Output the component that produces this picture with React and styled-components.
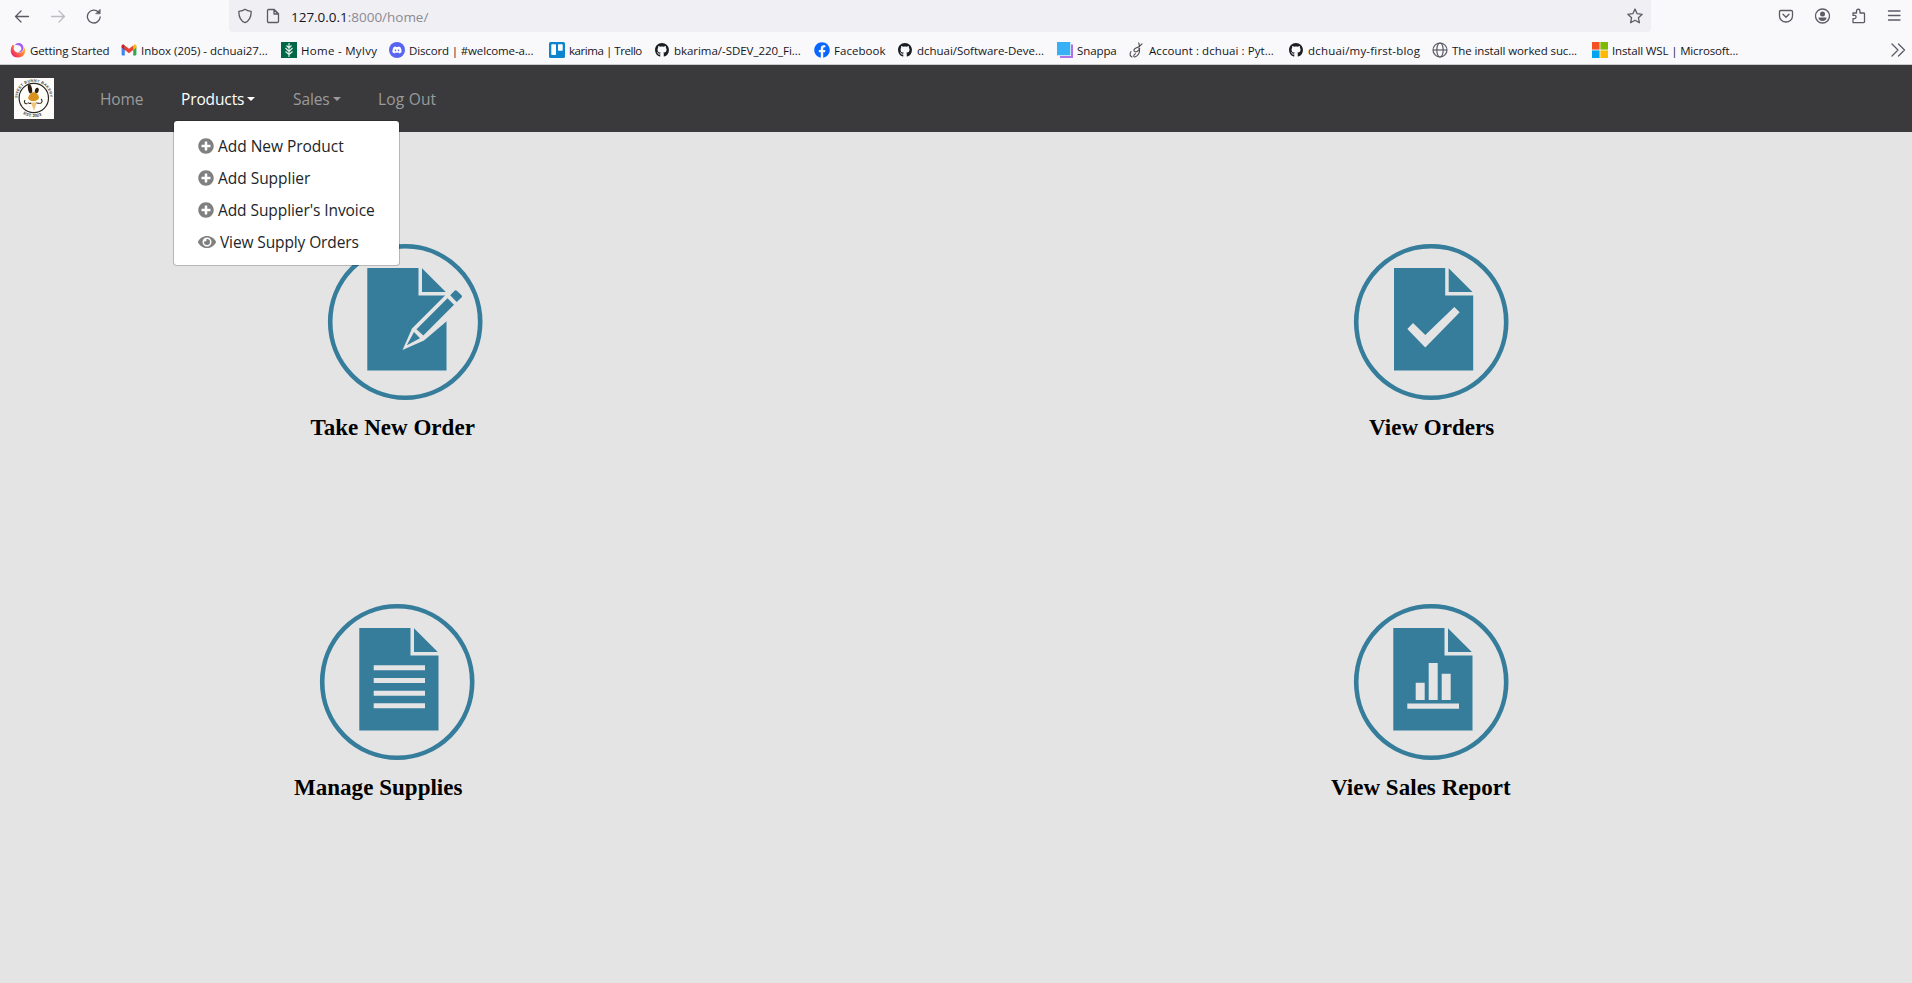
import React from "react";
import styled, { createGlobalStyle } from "styled-components";
import { FaGithub, FaFacebook, FaDiscord, FaPlusCircle, FaEye } from "react-icons/fa";

const GlobalStyle = createGlobalStyle`
  * { box-sizing: border-box; }
  html, body, #root { height: 100%; }
  body { margin: 0; background: #e4e4e4; overflow: hidden; font-family: "Open Sans", "Noto Sans", sans-serif; }
`;

const Page = styled.div`
  display: flex;
  flex-direction: column;
  height: 983px;
  width: 1912px;
  overflow: hidden;
`;

const Chrome = styled.header`
  background: #f9f9fb;
  height: 65px;
  border-bottom: 1px solid #cbcbce;
  flex: none;
`;

const Toolbar = styled.div`
  display: flex;
  height: 32px;
  align-items: center;
  color: #5b5b66;
  svg { display: block; flex: none; }
`;

const ToolGroup = styled.div`
  display: flex;
  align-items: center;
  gap: 20px;
  width: ${(p) => p.$width}px;
  padding-left: ${(p) => p.$pad}px;
`;

const AddressBar = styled.div`
  display: flex;
  align-items: center;
  width: 1422px;
  height: 32px;
  padding: 0 8px;
  background: #f0eff4;
  border-radius: 0 0 4px 4px;
`;

const SiteIcons = styled.div`
  display: flex;
  gap: 12px;
`;

const Url = styled.div`
  flex: 1;
  margin-left: 10px;
  padding-top: 1px;
  font-size: 13.5px;
  line-height: 18px;
  letter-spacing: -0.02px;
  color: #8b8b92;
  b { font-weight: 400; color: #15141a; }
`;

const Bookmarks = styled.div`
  display: flex;
  align-items: center;
  height: 32px;
  padding: 4px 0 0 10px;
`;

const Bookmark = styled.div`
  display: flex;
  align-items: center;
  gap: 4px;
  width: ${(p) => p.$width}px;
  height: 28px;
  flex: none;
  color: #15141a;
  font-size: 11.5px;
  line-height: 16px;
  letter-spacing: ${(p) => p.$spacing}px;
  white-space: nowrap;
  svg { display: block; flex: none; }
`;

const BookmarkLabel = styled.span`
  padding-top: 1px;
`;

const More = styled.div`
  color: #5b5b66;
  svg { display: block; }
`;

const Navbar = styled.nav`
  display: flex;
  align-items: center;
  height: 67px;
  padding-left: 14px;
  background: #3a3a3c;
  flex: none;
`;

const Brand = styled.div`
  width: 86px;
  height: 41px;
  svg { display: block; }
`;

const NavItem = styled.div`
  position: relative;
  display: flex;
  align-items: center;
  width: ${(p) => p.$width}px;
  height: 25px;
  color: ${(p) => (p.$active ? "#ffffff" : "#9a9a9b")};
  font-size: 15.5px;
  line-height: 24px;
  letter-spacing: ${(p) => p.$spacing || 0}px;
  white-space: nowrap;
`;

const Caret = styled.i`
  margin: 0 0 0 3px;
  border: 4.8px solid transparent;
  border-top-color: currentColor;
  border-bottom: 0;
`;

const Menu = styled.div`
  position: absolute;
  z-index: 2;
  top: 34px;
  left: -8px;
  width: 227px;
  height: 146px;
  padding: 9px 0 7px;
  background: #fff;
  background-clip: padding-box;
  border: 1px solid rgba(0, 0, 0, 0.2);
  border-radius: 4px;
`;

const MenuItem = styled.div`
  display: flex;
  align-items: center;
  gap: 4px;
  height: 32px;
  padding-left: 24px;
  color: #212529;
  letter-spacing: ${(p) => p.$spacing}px;
  svg { color: #808080; flex: none; }
`;

const Board = styled.main`
  display: grid;
  grid-template-columns: 1026px 1fr;
  grid-template-rows: 360px 360px;
  padding-top: 112px;
`;

const Tile = styled.section`
  svg { display: block; margin-left: ${(p) => p.$icon}px; }
`;

const TileLabel = styled.h2`
  margin: 14px 0 0 ${(p) => p.$left}px;
  color: #000;
  font: bold 23px/28px "Liberation Serif", serif;
  letter-spacing: 0.03px;
  white-space: nowrap;
`;

const Line = ({ children }) => (
  <svg width="16" height="16" viewBox="0 0 16 16" fill="none" stroke="currentColor" strokeWidth="1.3" strokeLinecap="round" strokeLinejoin="round">
    {children}
  </svg>
);

const FirefoxIcon = () => (
  <svg width="16" height="16" viewBox="0 0 16 16">
    <defs>
      <linearGradient id="flame" x1="0.9" y1="0.2" x2="0.1" y2="0.8">
        <stop offset="0" stopColor="#ffb52e" />
        <stop offset="0.5" stopColor="#ff7139" />
        <stop offset="1" stopColor="#e8246d" />
      </linearGradient>
    </defs>
    <path d="M2.500 3C-.5 7-.2 15.500 8 15.500c7 0 8-6 6.500-10.500C14 10 10 11.500 7 10.500 3.500 9.500 3 6 4.500 3.500z" fill="url(#flame)" />
    <path d="M4.500 3.500C7-.5 13 .5 13.500 5.500c.3 3-2.500 5.500-6 5C11 9.500 12 7.500 11 5.300 10 3 7 2.500 4.500 3.500z" fill="#a45df0" />
  </svg>
);

const GmailIcon = () => (
  <svg width="16" height="16" viewBox="0 0 16 16">
    <path d="M0.600 4v8.600a1 1 0 0 0 1 1h2.200V6.500z" fill="#4285f4" />
    <path d="M15.400 4v8.600a1 1 0 0 1-1 1h-2.200V6.500z" fill="#34a853" />
    <path d="M12.200 3.800v4.200l3.200-2.400V4c0-1.600-1.500-2-2.400-1.200z" fill="#fbbc04" />
    <path d="M3.800 8V3.600L8 6.800l4.200-3.200V8L8 11.200z" fill="#ea4335" />
    <path d="M0.600 4v1.600L3.800 8V3.600L3 2.800C2.100 2 .6 2.500.6 4z" fill="#c5221f" />
  </svg>
);

const IvyIcon = () => (
  <svg width="16" height="16" viewBox="0 0 16 16">
    <rect width="16" height="16" fill="#006747" />
    <path d="M8 1v14M8 6 5.500 3.500M8 6l2.500-2.500M8 9.500 4.500 6M8 9.500 11.500 6M8 12.500 4.500 9.500M8 12.500l3.500-3" stroke="#e4efe9" strokeWidth="1.100" fill="none" />
  </svg>
);

const DiscordIcon = () => (
  <svg width="16" height="16" viewBox="0 0 16 16">
    <circle cx="8" cy="8" r="8" fill="#5865f2" />
    <FaDiscord x="3" y="3" size="10" color="#fff" />
  </svg>
);

const TrelloIcon = () => (
  <svg width="16" height="16" viewBox="0 0 16 16">
    <rect width="16" height="16" rx="1.500" fill="#0d84ce" />
    <rect x="2.300" y="2.300" width="4.700" height="10.700" rx="0.700" fill="#fff" />
    <rect x="9" y="2.300" width="4.700" height="6.500" rx="0.700" fill="#fff" />
  </svg>
);

const GithubIcon = () => (
  <svg width="16" height="16" viewBox="0 0 16 16">
    <FaGithub x="0.800" y="0.800" size="14.400" color="#1b1f23" />
  </svg>
);

const FacebookIcon = () => <FaFacebook size={16} color="#0866ff" />;

const SnappaIcon = () => (
  <svg width="16" height="16" viewBox="0 0 16 16">
    <path d="M3 14h11V2.500h2V16H3z" fill="#b072e6" />
    <rect width="13.300" height="13.300" fill="#38b0f5" />
  </svg>
);

const SnakeIcon = () => (
  <svg width="16" height="16" viewBox="0 0 16 16" fill="none" stroke="#4c4c50" strokeWidth="1.100" strokeLinecap="round">
    <path d="M9.800.800 10.500 4.500M13 1.800 10.200 4.500 6.500 6.200C3.500 7.500 5.500 11 8 9.500s3.500-4 1.800-3.200M2 9.500c-2 2.500-.5 5 1 5.500M10.500 7.500c.5 3-1.500 6.500-4.500 7.500-2 .3-1.500-2.500.5-3.200" />
  </svg>
);

const GlobeIcon = () => (
  <svg width="16" height="16" viewBox="0 0 16 16" fill="none" stroke="#5b5b66" strokeWidth="1.200">
    <circle cx="8" cy="8" r="7" />
    <ellipse cx="8" cy="8" rx="3.200" ry="7" />
    <path d="M1 8h14" />
  </svg>
);

const MicrosoftIcon = () => (
  <svg width="16" height="16" viewBox="0 0 16 16">
    <rect width="7.600" height="7.600" fill="#f25022" />
    <rect x="8.400" width="7.600" height="7.600" fill="#7fba00" />
    <rect y="8.400" width="7.600" height="7.600" fill="#00a4ef" />
    <rect x="8.400" y="8.400" width="7.600" height="7.600" fill="#ffb900" />
  </svg>
);

const BakeryLogo = () => (
  <svg width="40" height="41" viewBox="0 0 40 41">
    <defs>
      <path id="arcTop" d="M3.500 20A16.300 16.300 0 0 1 36.100 20" />
      <path id="arcBottom" d="M0.700 20A19.100 19.100 0 0 0 38.900 20" />
    </defs>
    <rect width="40" height="41" fill="#fdfcf9" />
    <circle cx="19.800" cy="20" r="14.700" fill="#fffefb" stroke="#2b2723" strokeWidth="1.200" />
    <ellipse cx="16" cy="11" rx="2" ry="4.500" transform="rotate(-12 16 11)" fill="#2c1c10" />
    <ellipse cx="22.800" cy="12.500" rx="1.900" ry="2.800" transform="rotate(20 22.800 12.500)" fill="#2c1c10" />
    <path d="M14 20c1-3 3-5.500 5.500-6 3 .5 5.500 3 5.500 6-1.500 4-9 4.500-11 0z" fill="#d8921d" />
    <path d="M16.800 24.500h6L20 33z" fill="#f0c37c" />
    <path d="M11 22c-1.500 2 0 4.500 2.500 3.500M14 24.500c1 1.200 2.200 1.300 3 .3M27 21c2 1.500 1 4.500-1.500 4.500M22.500 24.500c.8 1 2 1 2.800.3" fill="none" stroke="#342719" strokeWidth="1.100" />
    <text fontFamily="Liberation Sans, sans-serif" fontSize="3.800" fontWeight="bold" fill="#4b4640"><textPath href="#arcTop" textLength="50">SWEET BUNNY BAKERY</textPath></text>
    <text fontFamily="Liberation Sans, sans-serif" fontSize="4.200" fontWeight="bold" fill="#3b3630"><textPath href="#arcBottom" startOffset="31%">EST. 2023</textPath></text>
  </svg>
);

const ICON_BLUE = "#357d9b";
const PAPER = "#e4e4e4";

const TileIcon = ({ shift = 0, children }) => (
  <svg width="156" height="156" viewBox="0 0 156 156">
    <ellipse cx="78.200" cy="78" rx="75" ry="75.700" fill="none" stroke={ICON_BLUE} strokeWidth="4.600" />
    <path d={`M${40.3 + shift} 24H${91.5 + shift}V51.500H${119.5 + shift}V126.500H${40.3 + shift}zM${95 + shift} 24.300V48H${118.8 + shift}z`} fill={ICON_BLUE} />
    {children}
  </svg>
);

const PencilArt = () => (
  <>
    <path d="M75.500 106 85 84.500 120.500 49 137 62.500 97 96.500z" fill={PAPER} />
    <path d="M89.500 85.300 120.500 54.300 127 60.700 96.300 91.600zM79.800 101.300 87 88 93 94.300z" fill={ICON_BLUE} />
    <path d="M123.200 51.200 127.600 46.800Q128.700 45.700 129.800 46.800L134.500 51.200Q135.600 52.300 134.500 53.400L129.700 58z" fill={ICON_BLUE} />
  </>
);
const CheckArt = () => <path d="M54.300 85 60 79 72.300 91 101.300 63 106.700 68.300 72.300 103.500z" fill={PAPER} />;
const LinesArt = () => <path d="M54.700 61.300h51.300v5H54.700zM54.700 74h51.300v5H54.700zM54.700 86.700h51.300v5H54.700zM54.700 99.300h51.300v5H54.700z" fill={PAPER} />;
const ChartArt = () => <path d="M62.700 78.700h9V96h-9zM75.700 59h9v37h-9zM88.700 69.700h9V96h-9zM54.300 99.500h51.700v5.200H54.300z" fill={PAPER} />;

const bookmarks = [
  { label: "Getting Started", Icon: FirefoxIcon, width: 111, spacing: -0.12 },
  { label: "Inbox (205) - dchuai27...", Icon: GmailIcon, width: 160, spacing: -0.03 },
  { label: "Home - MyIvy", Icon: IvyIcon, width: 108, spacing: 0.28 },
  { label: "Discord | #welcome-a...", Icon: DiscordIcon, width: 160, spacing: -0.14 },
  { label: "karima | Trello", Icon: TrelloIcon, width: 105, spacing: -0.45 },
  { label: "bkarima/-SDEV_220_Fi...", Icon: GithubIcon, width: 160, spacing: -0.04 },
  { label: "Facebook", Icon: FacebookIcon, width: 83, spacing: 0.05 },
  { label: "dchuai/Software-Deve...", Icon: GithubIcon, width: 160, spacing: -0.03 },
  { label: "Snappa", Icon: SnappaIcon, width: 72, spacing: -0.1 },
  { label: "Account : dchuai : Pyt...", Icon: SnakeIcon, width: 159, spacing: 0.07 },
  { label: "dchuai/my-first-blog", Icon: GithubIcon, width: 144, spacing: 0.2 },
  { label: "The install worked suc...", Icon: GlobeIcon, width: 160, spacing: -0.11 },
  { label: "Install WSL | Microsoft...", Icon: MicrosoftIcon, width: 298, spacing: -0.15 },
];

const menuItems = [
  { label: "Add New Product", Icon: FaPlusCircle, size: 16, spacing: -0.03 },
  { label: "Add Supplier", Icon: FaPlusCircle, size: 16, spacing: -0.03 },
  { label: "Add Supplier's Invoice", Icon: FaPlusCircle, size: 16, spacing: -0.08 },
  { label: "View Supply Orders", Icon: FaEye, size: 18, spacing: -0.12 },
];

const tiles = [
  { label: "Take New Order", Art: PencilArt, icon: 327, left: 310.5, shift: 0 },
  { label: "View Orders", Art: CheckArt, icon: 327, left: 343, shift: 0.7 },
  { label: "Manage Supplies", Art: LinesArt, icon: 319, left: 294, shift: 0 },
  { label: "View Sales Report", Art: ChartArt, icon: 327, left: 305, shift: 0 },
];

export default function App() {
  return (
    <Page>
      <GlobalStyle />
      <Chrome>
        <Toolbar>
          <ToolGroup $width={229} $pad={14}>
            <Line><path d="M1.500 8.500h13M7 3 1.500 8.500 7 14" /></Line>
            <Line><path stroke="#bcbcc2" d="M1.500 8.500h13M9 3l5.500 5.500L9 14" /></Line>
            <Line><path d="M14.200 9A6.400 6.400 0 1 1 12.500 4.200" /><path d="M14.200 1.500v4.300H9.900z" fill="currentColor" strokeWidth="0.600" /></Line>
          </ToolGroup>
          <AddressBar>
            <SiteIcons>
              <Line><path d="M8 1.300C6.500 2.500 4 3.200 1.800 3.400c0 5 1.700 9.300 6.200 11.300 4.500-2 6.200-6.300 6.200-11.300C12 3.200 9.500 2.500 8 1.300z" /></Line>
              <Line><path d="M3.500 1.500h5.700l4.300 4.300v7.400q0 1.300-1.300 1.300H3.800q-1.300 0-1.300-1.300V2.800q0-1.300 1-1.300zM9 1.800v4.200h4.200z" /></Line>
            </SiteIcons>
            <Url><b>127.0.0.1</b>:8000/home/</Url>
            <Line><path d="M8 1 10.100 5.700 15.200 6.300 11.400 9.700 12.400 14.800 8 12.300 3.600 14.800 4.600 9.700.8 6.300 5.900 5.700z" /></Line>
          </AddressBar>
          <ToolGroup $width={261} $pad={127}>
            <Line><path d="M2.800 2.500h10.400q1.300 0 1.300 1.300V8a6.500 6 0 0 1-13 0V3.800q0-1.300 1.300-1.300zM5 6.300l3 3 3-3" /></Line>
            <Line><circle cx="8.500" cy="8" r="7" /><circle cx="8.500" cy="6" r="2.500" fill="currentColor" stroke="none" /><path d="M4.500 9.500h8c0 2-1.500 3.500-4 3.500s-4-1.500-4-3.500z" fill="currentColor" stroke="none" /></Line>
            <Line><path d="M6.500 5V3a1.700 1.700 0 0 1 3.500 0v2h3.700q.8 0 .8.800v8q0 .8-.8.800H3v-4h1.500a1.500 1.500 0 0 0 0-3.200H3V5z" /></Line>
            <Line><path d="M2.500 3h11.500M2.500 7.500h11.500M2.500 12h11.500" /></Line>
          </ToolGroup>
        </Toolbar>
        <Bookmarks>
          {bookmarks.map(({ label, Icon, width, spacing }) => (
            <Bookmark key={label} $width={width} $spacing={spacing}>
              <Icon />
              <BookmarkLabel>{label}</BookmarkLabel>
            </Bookmark>
          ))}
          <More><Line><path d="M2 2l6 6-6 6M8.500 2l6 6-6 6" /></Line></More>
        </Bookmarks>
      </Chrome>
      <Navbar>
        <Brand><BakeryLogo /></Brand>
        <NavItem $width={81} $spacing={-0.1}>Home</NavItem>
        <NavItem $width={112} $active $spacing={-0.12}>
          Products<Caret />
          <Menu>
            {menuItems.map(({ label, Icon, size, spacing }) => (
              <MenuItem key={label} $spacing={spacing}>
                <Icon size={size} />
                {label}
              </MenuItem>
            ))}
          </Menu>
        </NavItem>
        <NavItem $width={85} $spacing={-0.1}>Sales<Caret /></NavItem>
        <NavItem $width={80} $spacing={0.2}>Log Out</NavItem>
      </Navbar>
      <Board>
        {tiles.map(({ label, Art, icon, left, shift }) => (
          <Tile key={label} $icon={icon}>
            <TileIcon shift={shift}><Art /></TileIcon>
            <TileLabel $left={left}>{label}</TileLabel>
          </Tile>
        ))}
      </Board>
    </Page>
  );
}
